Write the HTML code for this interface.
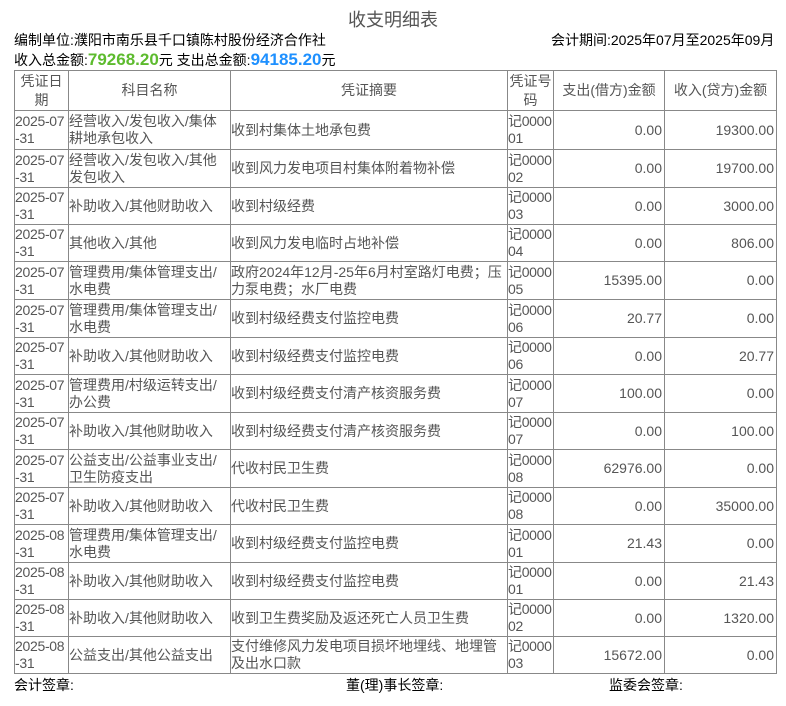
<!DOCTYPE html>
<html><head><meta charset="utf-8"><style>
body{margin:0;background:#fff;font-family:"Liberation Sans","Noto Sans CJK SC",sans-serif;color:#000;}
.t{position:absolute;left:0;width:786px;top:6px;text-align:center;font-size:18px;color:#555;}
.a{position:absolute;font-size:14px;line-height:17px;white-space:nowrap;}
table{position:absolute;left:14px;top:70px;width:763px;border-collapse:collapse;table-layout:fixed;font-size:14px;line-height:17px;color:#555;}
td{border:1px solid #888;padding:0;overflow:hidden;word-break:break-all;}
td.d,td.v{letter-spacing:-0.3px;}
th{border:1px solid #888;font-weight:normal;padding:0;line-height:19px;}
.r{text-align:right;padding-right:2px;}
.g{color:#5dbb2e;font-weight:bold;font-size:17px;}
.b{color:#1e90ff;font-weight:bold;font-size:17px;}
</style></head><body>
<div class="t">收支明细表</div>
<div class="a" style="left:14px;top:32px">编制单位:濮阳市南乐县千口镇陈村股份经济合作社</div>
<div class="a" style="left:551px;top:32px">会计期间:2025年07月至2025年09月</div>
<div class="a" style="left:14px;top:51px">收入总金额:<span class="g">79268.20</span>元 支出总金额:<span class="b">94185.20</span>元</div>
<table>
<colgroup><col style="width:54px"><col style="width:162px"><col style="width:277px"><col style="width:46px"><col style="width:111px"><col style="width:112px"></colgroup>
<tr style="height:40px"><th>凭证日期</th><th>科目名称</th><th>凭证摘要</th><th>凭证号码</th><th>支出(借方)金额</th><th>收入(贷方)金额</th></tr>
<tr style="height:39px"><td class="d">2025-07-31</td><td>经营收入/发包收入/集体耕地承包收入</td><td>收到村集体土地承包费</td><td class="v">记000001</td><td class="r">0.00</td><td class="r">19300.00</td></tr>
<tr style="height:38px"><td class="d">2025-07-31</td><td>经营收入/发包收入/其他发包收入</td><td>收到风力发电项目村集体附着物补偿</td><td class="v">记000002</td><td class="r">0.00</td><td class="r">19700.00</td></tr>
<tr style="height:37px"><td class="d">2025-07-31</td><td>补助收入/其他财助收入</td><td>收到村级经费</td><td class="v">记000003</td><td class="r">0.00</td><td class="r">3000.00</td></tr>
<tr style="height:37px"><td class="d">2025-07-31</td><td>其他收入/其他</td><td>收到风力发电临时占地补偿</td><td class="v">记000004</td><td class="r">0.00</td><td class="r">806.00</td></tr>
<tr style="height:38px"><td class="d">2025-07-31</td><td>管理费用/集体管理支出/水电费</td><td>政府2024年12月-25年6月村室路灯电费；压力泵电费；水厂电费</td><td class="v">记000005</td><td class="r">15395.00</td><td class="r">0.00</td></tr>
<tr style="height:38px"><td class="d">2025-07-31</td><td>管理费用/集体管理支出/水电费</td><td>收到村级经费支付监控电费</td><td class="v">记000006</td><td class="r">20.77</td><td class="r">0.00</td></tr>
<tr style="height:37px"><td class="d">2025-07-31</td><td>补助收入/其他财助收入</td><td>收到村级经费支付监控电费</td><td class="v">记000006</td><td class="r">0.00</td><td class="r">20.77</td></tr>
<tr style="height:38px"><td class="d">2025-07-31</td><td>管理费用/村级运转支出/办公费</td><td>收到村级经费支付清产核资服务费</td><td class="v">记000007</td><td class="r">100.00</td><td class="r">0.00</td></tr>
<tr style="height:37px"><td class="d">2025-07-31</td><td>补助收入/其他财助收入</td><td>收到村级经费支付清产核资服务费</td><td class="v">记000007</td><td class="r">0.00</td><td class="r">100.00</td></tr>
<tr style="height:38px"><td class="d">2025-07-31</td><td>公益支出/公益事业支出/卫生防疫支出</td><td>代收村民卫生费</td><td class="v">记000008</td><td class="r">62976.00</td><td class="r">0.00</td></tr>
<tr style="height:37px"><td class="d">2025-07-31</td><td>补助收入/其他财助收入</td><td>代收村民卫生费</td><td class="v">记000008</td><td class="r">0.00</td><td class="r">35000.00</td></tr>
<tr style="height:38px"><td class="d">2025-08-31</td><td>管理费用/集体管理支出/水电费</td><td>收到村级经费支付监控电费</td><td class="v">记000001</td><td class="r">21.43</td><td class="r">0.00</td></tr>
<tr style="height:37px"><td class="d">2025-08-31</td><td>补助收入/其他财助收入</td><td>收到村级经费支付监控电费</td><td class="v">记000001</td><td class="r">0.00</td><td class="r">21.43</td></tr>
<tr style="height:37px"><td class="d">2025-08-31</td><td>补助收入/其他财助收入</td><td>收到卫生费奖励及返还死亡人员卫生费</td><td class="v">记000002</td><td class="r">0.00</td><td class="r">1320.00</td></tr>
<tr style="height:37px"><td class="d">2025-08-31</td><td>公益支出/其他公益支出</td><td>支付维修风力发电项目损坏地埋线、地埋管及出水口款</td><td class="v">记000003</td><td class="r">15672.00</td><td class="r">0.00</td></tr>
</table>
<div class="a" style="left:14px;top:677px">会计签章:</div>
<div class="a" style="left:346px;top:677px">董(理)事长签章:</div>
<div class="a" style="left:609px;top:677px">监委会签章:</div>
</body></html>
